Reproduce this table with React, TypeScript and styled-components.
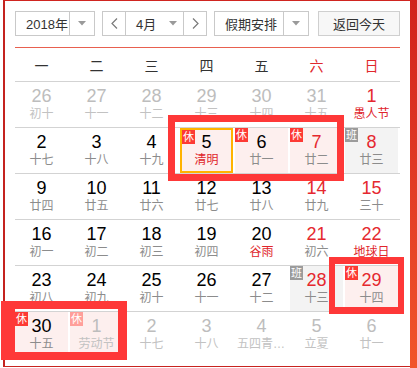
import React from 'react';
import styled, { createGlobalStyle } from 'styled-components';

const GlobalStyle = createGlobalStyle`
  html, body {
    margin: 0;
    padding: 0;
    background: #fff;
  }
  body {
    font-family: "Liberation Sans", "Noto Sans CJK SC", sans-serif;
  }
`;

const Page = styled.div`
  position: relative;
  display: flex;
  width: 417px;
  height: 368px;
  overflow: hidden;
`;

const Frame = styled.div`
  box-sizing: border-box;
  margin-left: 3px;
  width: 407px;
  height: 367px;
  padding: 10px 10px 0 10px;
  border-left: 2px solid #c4231f;
  border-top: 1px solid #d02520;
  border-bottom: 1px solid #c8231f;
  background: #fff;
`;

const EdgeStrip = styled.div`
  width: 7px;
  height: 368px;
  background: linear-gradient(180deg, #d1221c 0%, #e23b25 50%, #f1552a 100%);
`;

const Toolbar = styled.div`
  display: flex;
  align-items: center;
  height: 25px;
`;

const Control = styled.div<{ $w: number; $gap?: number }>`
  box-sizing: border-box;
  display: flex;
  width: ${p => p.$w}px;
  height: 25px;
  margin-right: ${p => p.$gap ?? 0}px;
  border: 1px solid #c9c9c9;
  background: #fff;
  font-size: 13px;
  color: #333;
`;

const ControlText = styled.div`
  flex: 1;
  display: flex;
  align-items: center;
  padding-left: 10px;
  font-family: "Liberation Sans", "Noto Sans CJK SC", sans-serif;
`;

const ArrowBox = styled.div<{ $divider?: boolean }>`
  display: flex;
  align-items: center;
  justify-content: center;
  width: 24px;
  border-left: ${p => (p.$divider ? '1px solid #c9c9c9' : 'none')};
`;

const NavButton = styled.div<{ $side: 'left' | 'right' }>`
  display: flex;
  align-items: center;
  justify-content: center;
  width: 22px;
  ${p => (p.$side === 'left' ? 'border-right' : 'border-left')}: 1px solid #c9c9c9;
`;

const MonthText = styled.div`
  flex: 1;
  display: flex;
  align-items: center;
  justify-content: space-between;
  padding: 0 6px 0 10px;
`;

const TodayButton = styled.button`
  box-sizing: border-box;
  width: 82px;
  height: 25px;
  margin-left: 2px;
  padding: 0;
  border: 1px solid #cfcfcf;
  background: #f7f7f7;
  color: #333;
  font-size: 13px;
  font-family: "Liberation Sans", "Noto Sans CJK SC", sans-serif;
`;

const Divider = styled.div`
  height: 1px;
  margin-top: 11px;
  background: #e8604f;
`;

const WeekHeader = styled.div`
  display: grid;
  grid-template-columns: repeat(7, 55px);
  height: 33px;
  align-items: center;
`;

const WeekDay = styled.div<{ $red?: boolean }>`
  padding-right: 2px;
  text-align: center;
  font-size: 14px;
  color: ${p => (p.$red ? '#e0282c' : '#333')};
`;

const Row = styled.div`
  display: grid;
  grid-template-columns: repeat(7, 55px);
  height: 46px;
  border-top: 1px solid #d3d3d3;
  box-sizing: border-box;
`;

type Tone = 'rest' | 'work' | 'none';

const Cell = styled.div<{ $tone: Tone; $today?: boolean }>`
  position: relative;
  box-sizing: border-box;
  width: 53px;
  height: 45px;
  padding-top: 4px;
  text-align: center;
  background: ${p => (p.$tone === 'rest' ? '#fdefee' : p.$tone === 'work' ? '#f3f3f3' : 'transparent')};
  border: ${p => (p.$today ? '2px solid #ffb300' : 'none')};
  ${p => (p.$today ? 'padding-top: 2px;' : '')}
`;

const DayNum = styled.div<{ $color: string }>`
  height: 20px;
  line-height: 20px;
  font-size: 18px;
  color: ${p => p.$color};
`;

const Lunar = styled.div<{ $color: string }>`
  height: 16px;
  line-height: 16px;
  padding: 0 2px;
  font-size: 12px;
  color: ${p => p.$color};
  white-space: nowrap;
  overflow: hidden;
  text-overflow: ellipsis;
`;

const Badge = styled.span<{ $kind: 'rest' | 'work'; $faded?: boolean }>`
  position: absolute;
  left: 0;
  top: 0;
  width: 13px;
  height: 14px;
  line-height: 14px;
  font-size: 11px;
  text-align: center;
  color: #fff;
  background: ${p => (p.$kind === 'work' ? '#9b9b9b' : p.$faded ? '#ff9f9a' : '#fd3a34')};
`;

const Mark = styled.div<{ $x: number; $y: number; $w: number; $h: number; $b: string }>`
  position: absolute;
  box-sizing: border-box;
  left: ${p => p.$x}px;
  top: ${p => p.$y}px;
  width: ${p => p.$w}px;
  height: ${p => p.$h}px;
  border-style: solid;
  border-color: #fe3838;
  border-width: ${p => p.$b};
  pointer-events: none;
`;

const Triangle = () => (
  <svg width="8" height="5" viewBox="0 0 8 5">
    <path d="M0 0 L8 0 L4 4.5 Z" fill="#9a9a9a" />
  </svg>
);

const Chevron = ({ dir }: { dir: 'left' | 'right' }) => (
  <svg width="7" height="11" viewBox="0 0 7 11">
    <path
      d={dir === 'left' ? 'M6 0.5 L1 5.5 L6 10.5' : 'M1 0.5 L6 5.5 L1 10.5'}
      fill="none"
      stroke="#7a7a7a"
      strokeWidth="1.2"
    />
  </svg>
);

interface Day {
  d: number;
  l: string;
  other?: boolean;
  red?: boolean;
  fest?: boolean;
  badge?: 'rest' | 'work';
  today?: boolean;
}

const weeks: Day[][] = [
  [
    { d: 26, l: '初十', other: true },
    { d: 27, l: '十一', other: true },
    { d: 28, l: '十二', other: true },
    { d: 29, l: '十三', other: true },
    { d: 30, l: '十四', other: true },
    { d: 31, l: '十五', other: true },
    { d: 1, l: '愚人节', red: true, fest: true },
  ],
  [
    { d: 2, l: '十七' },
    { d: 3, l: '十八' },
    { d: 4, l: '十九' },
    { d: 5, l: '清明', fest: true, badge: 'rest', today: true },
    { d: 6, l: '廿一', badge: 'rest' },
    { d: 7, l: '廿二', red: true, badge: 'rest' },
    { d: 8, l: '廿三', red: true, badge: 'work' },
  ],
  [
    { d: 9, l: '廿四' },
    { d: 10, l: '廿五' },
    { d: 11, l: '廿六' },
    { d: 12, l: '廿七' },
    { d: 13, l: '廿八' },
    { d: 14, l: '廿九', red: true },
    { d: 15, l: '三十', red: true },
  ],
  [
    { d: 16, l: '初一' },
    { d: 17, l: '初二' },
    { d: 18, l: '初三' },
    { d: 19, l: '初四' },
    { d: 20, l: '谷雨', fest: true },
    { d: 21, l: '初六', red: true },
    { d: 22, l: '地球日', red: true, fest: true },
  ],
  [
    { d: 23, l: '初八' },
    { d: 24, l: '初九' },
    { d: 25, l: '初十' },
    { d: 26, l: '十一' },
    { d: 27, l: '十二' },
    { d: 28, l: '十三', red: true, badge: 'work' },
    { d: 29, l: '十四', red: true, badge: 'rest' },
  ],
  [
    { d: 30, l: '十五', badge: 'rest' },
    { d: 1, l: '劳动节', other: true, badge: 'rest' },
    { d: 2, l: '十七', other: true },
    { d: 3, l: '十八', other: true },
    { d: 4, l: '五四青年节', other: true },
    { d: 5, l: '立夏', other: true },
    { d: 6, l: '廿一', other: true },
  ],
];

const numColor = (day: Day) => (day.other ? '#bdbdbd' : day.red ? '#e5282f' : '#000');
const lunarColor = (day: Day) => (day.other ? '#c2c2c2' : day.fest ? '#e0252b' : '#8c8c8c');

const App = () => (
  <Page>
    <GlobalStyle />
    <Frame>
      <Toolbar>
        <Control $w={80} $gap={7}>
          <ControlText>2018年</ControlText>
          <ArrowBox $divider>
            <Triangle />
          </ArrowBox>
        </Control>
        <Control $w={105} $gap={7}>
          <NavButton $side="left">
            <Chevron dir="left" />
          </NavButton>
          <MonthText>
            <span>4月</span>
            <Triangle />
          </MonthText>
          <NavButton $side="right">
            <Chevron dir="right" />
          </NavButton>
        </Control>
        <Control $w={95} $gap={7}>
          <ControlText>假期安排</ControlText>
          <ArrowBox $divider>
            <Triangle />
          </ArrowBox>
        </Control>
        <TodayButton>返回今天</TodayButton>
      </Toolbar>
      <Divider />
      <WeekHeader>
        {['一', '二', '三', '四', '五', '六', '日'].map((w, i) => (
          <WeekDay key={w} $red={i >= 5}>
            {w}
          </WeekDay>
        ))}
      </WeekHeader>
      {weeks.map((week, wi) => (
        <Row key={wi}>
          {week.map((day, di) => (
            <Cell key={di} $tone={day.badge ?? 'none'} $today={day.today}>
              {day.badge && (
                <Badge $kind={day.badge} $faded={day.other}>
                  {day.badge === 'rest' ? '休' : '班'}
                </Badge>
              )}
              <DayNum $color={numColor(day)}>{day.d}</DayNum>
              <Lunar $color={lunarColor(day)}>{day.l}</Lunar>
            </Cell>
          ))}
        </Row>
      ))}
    </Frame>
    <EdgeStrip />
    <Mark $x={168} $y={115} $w={176} $h={66} $b="7px 7px 7px 7px" />
    <Mark $x={329} $y={257} $w={75} $h={57} $b="7px 6px 7px 6px" />
    <Mark $x={1} $y={301} $w={126} $h={59} $b="8px 9px 8px 14px" />
  </Page>
);

export default App;
